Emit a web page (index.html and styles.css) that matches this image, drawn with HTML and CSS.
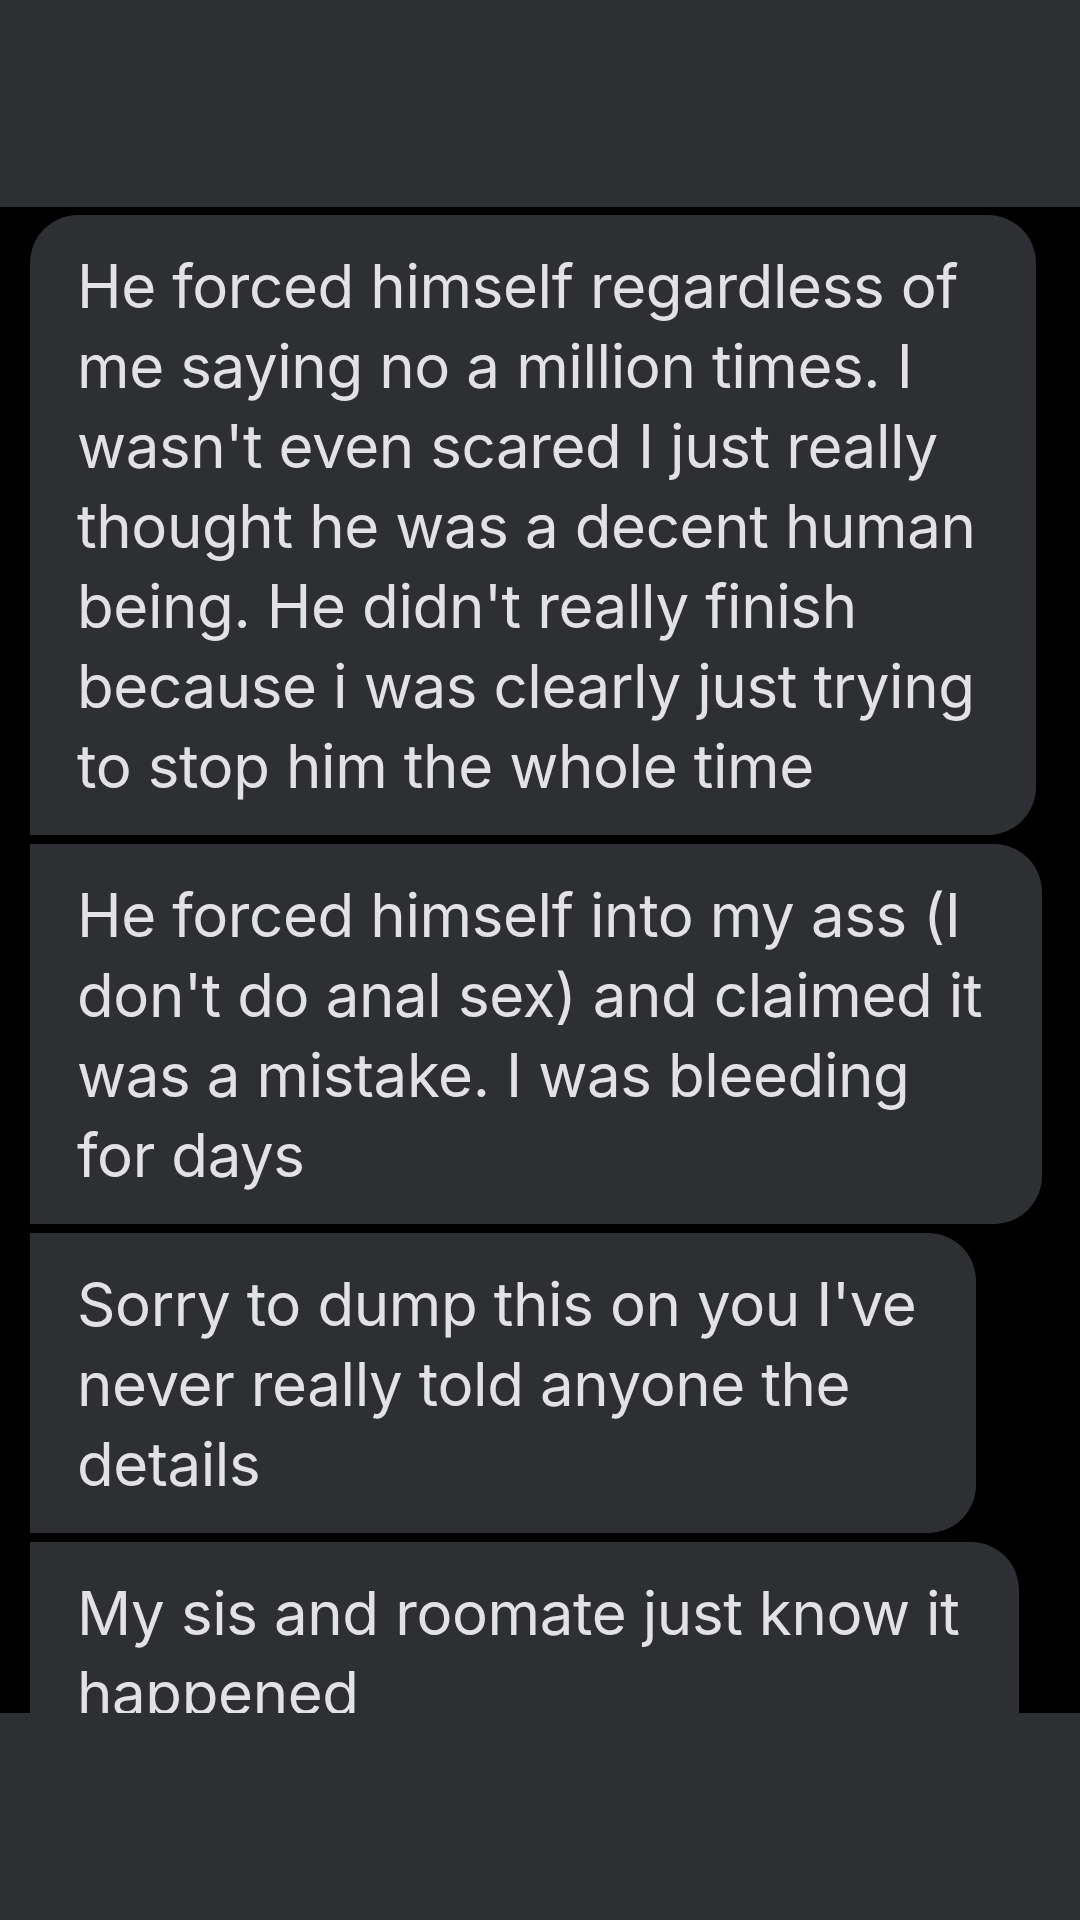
FILE: index.html
```html
<!DOCTYPE html>
<html lang="en">
<head>
    <meta charset="UTF-8">
    <meta name="viewport" content="width=device-width, initial-scale=1.0">
    <title>Messages</title>
    <link rel="stylesheet" href="styles.css">
</head>
<body>
    <div class="band"></div>

    <div class="thread">
        <!-- received messages, grouped -->
        <div class="bubble first">He forced himself regardless of<br>me saying no a million times. I<br>wasn't even scared I just really<br>thought he was a decent human<br>being. He didn't really finish<br>because i was clearly just trying<br>to stop him the whole time</div>
        <div class="bubble">He forced himself into my ass (I<br>don't do anal sex) and claimed it<br>was a mistake. I was bleeding<br>for days</div>
        <div class="bubble">Sorry to dump this on you I've<br>never really told anyone the<br>details</div>
        <div class="bubble">My sis and roomate just know it<br>happened</div>
    </div>

    <div class="band"></div>
</body>
</html>
```

FILE: styles.css
```css
body {
    margin: 0;
    padding: 0;
    width: 1080px;
    height: 1920px;
    background-color: #000;
    font-family: Inter, "Noto Sans", sans-serif;
    display: flex;
    flex-direction: column;
}

.band {
    height: 207px;
    background-color: #2d2f33;
    flex: none;
}

.thread {
    flex: 1;
    overflow: hidden;
    display: flex;
    flex-direction: column;
    align-items: flex-start;
    gap: 9px;
    padding: 8px 0 0 30px;
}

.bubble {
    background-color: #2d2f33;
    color: #e2e2e4;
    font-size: 60px;
    font-weight: 400;
    letter-spacing: -0.4px;
    line-height: 80px;
    white-space: nowrap;
    padding: 31px 60px 29px 47px;
    border-radius: 0 48px 48px 0;
    flex: none;
}

.bubble.first {
    border-top-left-radius: 48px;
}
```
